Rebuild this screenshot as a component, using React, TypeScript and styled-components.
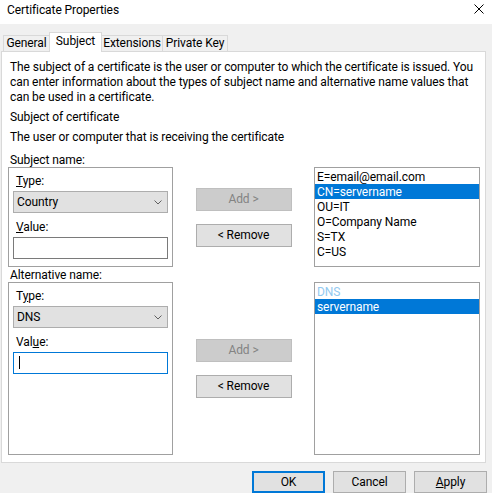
import styled, { createGlobalStyle } from 'styled-components';

const GlobalStyle = createGlobalStyle`
  html, body {
    margin: 0;
    padding: 0;
  }
  body {
    width: 492px;
    height: 493px;
    overflow: hidden;
    background: #f0f0f0;
    color: #000;
    font-family: Roboto, 'Noto Sans', sans-serif;
    font-size: 12px;
    line-height: 15px;
    letter-spacing: -0.08px;
  }
`;

const Window = styled.div`
  width: 492px;
  height: 493px;
  display: flex;
  flex-direction: column;
  background: #f0f0f0;
`;

const TitleBar = styled.div`
  height: 24px;
  flex: none;
  box-sizing: border-box;
  padding: 3px 8px 0 7px;
  background: #fff;
  display: flex;
  align-items: flex-start;
  justify-content: space-between;
`;

const CloseButton = styled.svg`
  margin-top: 1px;
`;

const TabStrip = styled.div`
  position: relative;
  z-index: 1;
  flex: none;
  height: 20px;
  margin: 8px 0 -1px;
  padding-left: 3px;
  display: flex;
  align-items: flex-end;
`;

const Tab = styled.div<{ $w: number; $active?: boolean }>`
  box-sizing: border-box;
  width: ${p => p.$w}px;
  height: ${p => (p.$active ? 20 : 17)}px;
  margin-left: -1px;
  padding-top: ${p => (p.$active ? 1 : 0)}px;
  border: 1px solid #d9d9d9;
  border-bottom: ${p => (p.$active ? 'none' : '1px solid #d9d9d9')};
  background: ${p => (p.$active ? '#fff' : '#f0f0f0')};
  position: relative;
  z-index: ${p => (p.$active ? 2 : 1)};
  text-align: center;
  white-space: nowrap;
  &:first-child {
    margin-left: 0;
  }
`;

const Panel = styled.div`
  flex: none;
  box-sizing: border-box;
  height: 412px;
  margin: 0 6px 0 1px;
  padding: 8px 5px 0 6px;
  background: #fff;
  border: 1px solid #d9d9d9;
`;

const Text = styled.div<{ $gap?: number }>`
  padding-left: 2px;
  margin-top: ${p => p.$gap ?? 0}px;
  white-space: nowrap;
`;

const Sections = styled.div`
  display: grid;
  width: 472px;
  margin-top: 7px;
  grid-template-columns: 165px 141px 166px;
  grid-template-rows: 15px 100px 15px 173px;
`;

const SectionLabel = styled.div`
  grid-column: 1 / -1;
  padding-left: 2px;
  line-height: 17px;
`;

const GroupBox = styled.div`
  box-sizing: border-box;
  border: 1px solid #a0a0a0;
  padding: 5px 4px 7px;
  display: flex;
  flex-direction: column;
`;

const FieldLabel = styled.div`
  padding-left: 3px;
  margin-bottom: 3px;
  line-height: 16px;
  height: 15px;
`;

const Combo = styled.div`
  box-sizing: border-box;
  height: 22px;
  margin-bottom: 6px;
  padding: 0 5px 0 3px;
  background: #e1e1e1;
  border: 1px solid #adadad;
  display: flex;
  align-items: center;
  justify-content: space-between;
`;

const Field = styled.div<{ $focused?: boolean }>`
  box-sizing: border-box;
  height: 22px;
  padding: 3px 0 0 5px;
  background: #fff;
  border: 1px solid ${p => (p.$focused ? '#0078d7' : '#7a7a7a')};
`;

const Caret = styled.span`
  display: block;
  width: 1px;
  height: 13px;
  background: #000;
`;

const ButtonColumn = styled.div`
  display: flex;
  flex-direction: column;
  align-items: center;
  justify-content: center;
  gap: 13px;
`;

const PushButton = styled.div<{ $disabled?: boolean }>`
  box-sizing: border-box;
  width: 96px;
  height: 23px;
  display: flex;
  align-items: center;
  justify-content: center;
  background: ${p => (p.$disabled ? '#cccccc' : '#e1e1e1')};
  border: 1px solid ${p => (p.$disabled ? '#bfbfbf' : '#adadad')};
  color: ${p => (p.$disabled ? '#838383' : '#000')};
`;

const ListBox = styled.div`
  box-sizing: border-box;
  padding-top: 1px;
  background: #fff;
  border: 1px solid #a0a0a0;
`;

const ListItem = styled.div<{ $selected?: boolean; $muted?: boolean }>`
  height: 15px;
  padding-left: 2px;
  line-height: 16px;
  white-space: nowrap;
  background: ${p => (p.$selected ? '#0078d7' : 'transparent')};
  color: ${p => (p.$selected ? '#fff' : p.$muted ? '#92c9f0' : '#000')};
`;

const Footer = styled.div`
  flex: none;
  display: flex;
  justify-content: flex-end;
  gap: 8px;
  padding: 8px 5px 0 0;
`;

const DialogButton = styled.div<{ $default?: boolean }>`
  box-sizing: border-box;
  width: 73px;
  height: 22px;
  display: flex;
  align-items: center;
  justify-content: center;
  background: #e1e1e1;
  border: ${p => (p.$default ? '2px solid #0078d7' : '1px solid #adadad')};
`;

function Chevron() {
  return (
    <svg width="8" height="5" viewBox="0 0 8 5">
      <path d="M0.5 0.5 L4 4 L7.5 0.5" fill="none" stroke="#606060" strokeWidth="1" />
    </svg>
  );
}

type EntryProps = {
  typeKey: [string, string, string];
  valueKey: [string, string, string];
  type: string;
  focused?: boolean;
};

function EntryGroup({ typeKey, valueKey, type, focused }: EntryProps) {
  return (
    <GroupBox>
      <FieldLabel>
        {typeKey[0]}
        <u>{typeKey[1]}</u>
        {typeKey[2]}
      </FieldLabel>
      <Combo>
        <span>{type}</span>
        <Chevron />
      </Combo>
      <FieldLabel>
        {valueKey[0]}
        <u>{valueKey[1]}</u>
        {valueKey[2]}
      </FieldLabel>
      <Field $focused={focused}>{focused && <Caret />}</Field>
    </GroupBox>
  );
}

const subjectItems = [
  'E=email@email.com',
  'CN=servername',
  'OU=IT',
  'O=Company Name',
  'S=TX',
  'C=US',
];

export default function App() {
  return (
    <Window>
      <GlobalStyle />
      <TitleBar>
        <span>Certificate Properties</span>
        <CloseButton width="10" height="10" viewBox="0 0 10 10">
          <path d="M0.5 0.5 L9.5 9.5 M9.5 0.5 L0.5 9.5" stroke="#000" strokeWidth="1" />
        </CloseButton>
      </TitleBar>

      <TabStrip>
        <Tab $w={47}>General</Tab>
        <Tab $w={53} $active>
          Subject
        </Tab>
        <Tab $w={62}>Extensions</Tab>
        <Tab $w={66}>Private Key</Tab>
      </TabStrip>

      <Panel>
        <Text>
          The subject of a certificate is the user or computer to which the certificate is issued. You
          <br />
          can enter information about the types of subject name and alternative name values that
          <br />
          can be used in a certificate.
        </Text>
        <Text $gap={5}>Subject of certificate</Text>
        <Text $gap={5}>The user or computer that is receiving the certificate</Text>

        <Sections>
          <SectionLabel>Subject name:</SectionLabel>
          <EntryGroup typeKey={['', 'T', 'ype:']} valueKey={['', 'V', 'alue:']} type="Country" />
          <ButtonColumn>
            <PushButton $disabled>Add &gt;</PushButton>
            <PushButton>&lt; Remove</PushButton>
          </ButtonColumn>
          <ListBox>
            {subjectItems.map(item => (
              <ListItem key={item} $selected={item === 'CN=servername'}>
                {item}
              </ListItem>
            ))}
          </ListBox>

          <SectionLabel>Alternative name:</SectionLabel>
          <EntryGroup typeKey={['T', 'y', 'pe:']} valueKey={['Val', 'u', 'e:']} type="DNS" focused />
          <ButtonColumn>
            <PushButton $disabled>Add &gt;</PushButton>
            <PushButton>&lt; Remove</PushButton>
          </ButtonColumn>
          <ListBox>
            <ListItem $muted>DNS</ListItem>
            <ListItem $selected>servername</ListItem>
          </ListBox>
        </Sections>
      </Panel>

      <Footer>
        <DialogButton $default>OK</DialogButton>
        <DialogButton>Cancel</DialogButton>
        <DialogButton>
          <u>A</u>pply
        </DialogButton>
      </Footer>
    </Window>
  );
}
